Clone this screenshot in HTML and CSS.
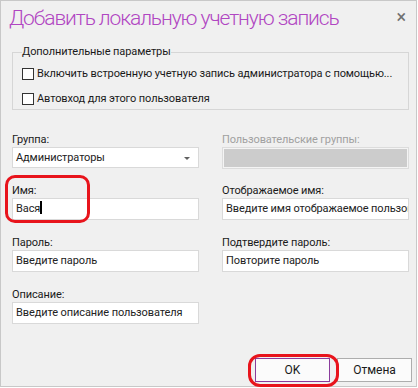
FILE: index.html
```html
<html lang="ru">
<head>
  <meta charset="UTF-8">
  <title>Добавить локальную учетную запись</title>
  <link rel="stylesheet" href="styles.css">
</head>
<body>

<div class="dialog">
  <div class="title-bar">
    <h1>Добавить локальную учетную запись</h1>
    <span class="close">&times;</span>
  </div>

  <fieldset class="options">
    <legend>Дополнительные параметры</legend>
    <label class="check"><span class="box"></span>Включить встроенную учетную запись администратора с помощью...</label>
    <label class="check"><span class="box"></span>Автовход для этого пользователя</label>
  </fieldset>

  <div class="form-grid">
    <div class="field top">
      <div class="label">Группа:</div>
      <div class="select">Администраторы<span class="arrow"></span></div>
    </div>
    <div class="field top">
      <div class="label disabled">Пользовательские группы:</div>
      <div class="input locked"></div>
    </div>

    <div class="field">
      <div class="label">Имя:</div>
      <div class="input">Вася<span class="caret"></span></div>
    </div>
    <div class="field">
      <div class="label">Отображаемое имя:</div>
      <div class="input">Введите имя отображаемое пользователя</div>
    </div>

    <div class="field">
      <div class="label">Пароль:</div>
      <div class="input">Введите пароль</div>
    </div>
    <div class="field">
      <div class="label">Подтвердите пароль:</div>
      <div class="input">Повторите пароль</div>
    </div>

    <div class="field">
      <div class="label">Описание:</div>
      <div class="input">Введите описание пользователя</div>
    </div>
  </div>

  <div class="buttons">
    <button class="btn primary">OK</button>
    <button class="btn">Отмена</button>
  </div>

  <!-- red marks drawn over the screenshot -->
  <div class="mark mark-name"></div>
  <div class="mark mark-ok"></div>
</div>

</body>
</html>
```

FILE: styles.css
```css
body {
  margin: 0;
  background: #ffffff;
  font-family: Roboto, "Noto Sans", Arial, sans-serif;
  font-size: 11px;
  letter-spacing: -0.1px;
  color: #1a1a1a;
}

.dialog {
  position: relative;
  box-sizing: border-box;
  width: 417px;
  height: 387px;
  background: #f0f0f0;
  border: 1px solid #c8c8c8;
  display: flex;
  flex-direction: column;
}

.title-bar {
  display: flex;
  justify-content: space-between;
  align-items: flex-start;
  padding: 3px 10px 0 8px;
  height: 41px;
}

.title-bar h1 {
  margin: 0;
  font-family: Roboto, "Open Sans", sans-serif;
  font-weight: 300;
  font-size: 21px;
  letter-spacing: -1.1px;
  line-height: 28px;
  color: #b046c2;
}

.close {
  font-size: 18px;
  line-height: 24px;
  color: #707070;
  margin-top: 1px;
}

.options {
  margin: 0 7px 0 11px;
  padding: 2px 0 8px 9px;
  border: 1px solid #d6d6d6;
  height: 65px;
  box-sizing: border-box;
}

.options legend {
  padding: 0;
  margin-left: 0;
  line-height: 14px;
}

.check {
  display: flex;
  align-items: center;
  height: 25px;
  white-space: nowrap;
}

.box {
  box-sizing: border-box;
  width: 12px;
  height: 12px;
  border: 1px solid #333333;
  background: #ffffff;
  margin-right: 3px;
}

.form-grid {
  display: grid;
  grid-template-columns: 187px 187px;
  column-gap: 23px;
  padding: 22px 0 0 11px;
}

.field {
  margin-bottom: 15px;
}

.field.top {
  margin-bottom: 14px;
}

.label {
  line-height: 15px;
  height: 15px;
  color: #1a1a1a;
}

.label.disabled {
  color: #a0a0a0;
}

.input,
.select {
  position: relative;
  box-sizing: border-box;
  height: 22px;
  line-height: 20px;
  padding: 0 3px;
  background: #ffffff;
  border: 1px solid #d9d9d9;
  white-space: nowrap;
  overflow: hidden;
  color: #222222;
}

.select {
  height: 21px;
  line-height: 19px;
  margin-bottom: 1px;
}

.input.locked {
  background: #cccccc;
  border-color: #dcdcdc;
  box-shadow: inset 0 0 0 1px #f4f4f4;
}

.arrow {
  position: absolute;
  right: 8px;
  top: 9px;
  border-left: 3px solid transparent;
  border-right: 3px solid transparent;
  border-top: 3px solid #606060;
}

.caret {
  display: inline-block;
  width: 2px;
  height: 13px;
  background: #000000;
  vertical-align: -2px;
}

.buttons {
  margin-top: auto;
  display: flex;
  justify-content: flex-end;
  gap: 7px;
  padding: 0 4px 4px 0;
}

.btn {
  box-sizing: border-box;
  width: 75px;
  height: 24px;
  font-family: Roboto, "Noto Sans", Arial, sans-serif;
  font-size: 12px;
  color: #1a1a1a;
  background: #fbfbfb;
  border: 1px solid #adadad;
  padding: 0;
}

.btn.primary {
  border-color: #8a3c9c;
}

.mark {
  position: absolute;
  border: 3px solid #e8141c;
  border-radius: 10px;
  box-sizing: border-box;
}

.mark-name {
  left: 4px;
  top: 174px;
  width: 85px;
  height: 48px;
}

.mark-ok {
  left: 247px;
  top: 353px;
  width: 91px;
  height: 33px;
  border-radius: 12px;
}
```
